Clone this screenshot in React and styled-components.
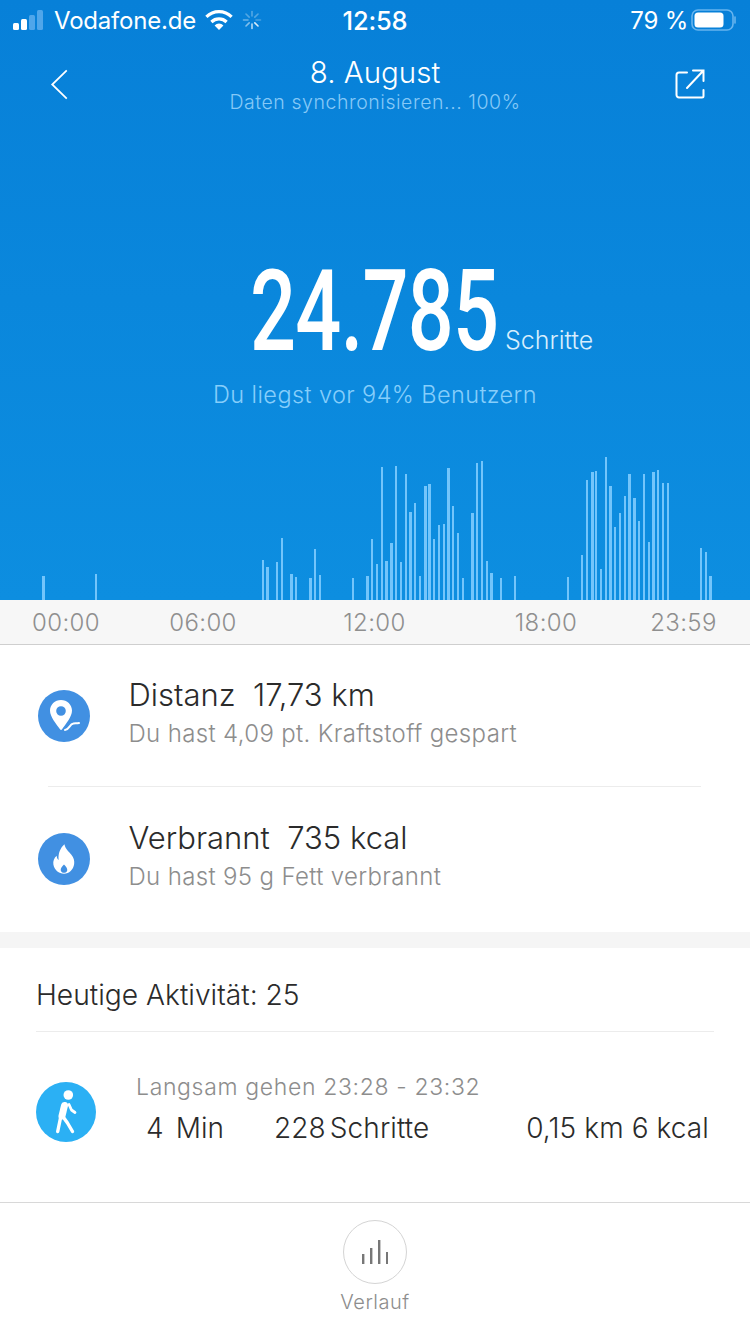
import React from 'react'
import styled, { createGlobalStyle } from 'styled-components'

const bars = [
  [43,3,24],[96,2,26],[263,2,40],[267,3,33],[277,2,38],[282,2,62],[291,3,26],[296,2,23],[310,3,22],[315,2,51],[320,2,25],
  [353,2,22],[367,3,24],[372,2,61],[377,2,36],[382,2,133],[386,3,39],[391,3,57],[396,2,134],[401,2,38],[406,2,126],
  [410,3,88],[415,2,97],[420,2,24],[425,3,114],[429,3,116],[434,2,61],[439,2,75],[444,2,76],[448,3,132],[453,2,94],
  [458,2,67],[463,2,22],[472,3,87],[477,2,137],[482,2,139],[487,2,39],[491,3,27],[501,2,22],[515,2,24],[568,2,23],
  [582,2,45],[587,2,120],[592,3,128],[596,2,129],[601,2,31],[606,2,143],[610,3,114],[615,2,73],[620,2,87],[625,2,104],
  [629,3,126],[634,3,102],[639,2,79],[644,2,126],[649,2,58],[653,3,128],[658,2,130],[663,2,117],[668,2,117],
  [701,2,52],[706,2,48],[710,3,24],
]

const axisLabels = ['00:00', '06:00', '12:00', '18:00', '23:59']

const GlobalStyle = createGlobalStyle`
  html, body { margin: 0; padding: 0; background: #fff; }
  body { font-family: "Inter", "Roboto", sans-serif; color: #333; }
  * { box-sizing: border-box; }
`

const Page = styled.div`
  width: 750px;
  height: 1334px;
  display: flex;
  flex-direction: column;
  overflow: hidden;
`

const Hero = styled.header`
  height: 600px;
  display: flex;
  flex-direction: column;
  background: linear-gradient(180deg, #0780d8 0%, #0d8ee0 100%);
  color: #fff;
`

const StatusBar = styled.div`
  height: 40px;
  padding: 0 13px;
  display: grid;
  grid-template-columns: 1fr auto 1fr;
  align-items: center;
  font-size: 24px;
  letter-spacing: -0.2px;
`

const StatusLeft = styled.div`
  display: flex;
  align-items: center;
  gap: 8px;
`

const Carrier = styled.span`
  margin-left: -1px;
`

const StatusRight = styled.div`
  display: flex;
  align-items: center;
  justify-content: flex-end;
  gap: 3px;
`

const Clock = styled.div`
  font-size: 25.5px;
  font-weight: 500;
`

const NavBar = styled.div`
  height: 80px;
  padding: 14px 50px 0;
  display: grid;
  grid-template-columns: 1fr auto 1fr;
  align-items: start;
`

const NavIcon = styled.svg`
  margin-top: ${p => p.$top}px;
  margin-right: ${p => p.$pull}px;
  justify-self: ${p => p.$side};
`

const NavTitle = styled.div`
  display: flex;
  flex-direction: column;
  align-items: center;
`

const DateText = styled.div`
  font-size: 29.5px;
  line-height: 36px;
  font-weight: 300;
`

const SyncText = styled.div`
  font-size: 19.5px;
  line-height: 24px;
  letter-spacing: 0.55px;
  font-weight: 300;
  color: #86c9f7;
`

const Total = styled.div`
  margin-top: 146px;
  height: 92px;
  display: flex;
  align-items: flex-end;
  padding-left: 250px;
`

const BigNumber = styled.div`
  width: 255px;
  font-family: "Roboto", sans-serif;
  font-size: 113px;
  font-weight: 500;
  line-height: 92px;
  letter-spacing: -1px;
  transform: scaleX(0.717);
  transform-origin: left bottom;
  white-space: nowrap;
`

const Unit = styled.div`
  font-size: 25px;
  line-height: 30px;
  font-weight: 300;
  color: #d7eefd;
  margin-bottom: 3px;
`

const Compare = styled.div`
  margin-top: 22px;
  text-align: center;
  font-size: 23.5px;
  line-height: 30px;
  font-weight: 300;
  letter-spacing: 0.4px;
  color: #86cefb;
`

const Chart = styled.svg`
  margin-top: auto;
  display: block;
`

const Axis = styled.div`
  height: 45px;
  display: grid;
  grid-template-columns: 132px 142px 201px 142px 133px;
  align-items: center;
  background: #f7f7f7;
  border-bottom: 1px solid #cfcfcf;
`

const AxisLabel = styled.div`
  text-align: center;
  font-size: 24px;
  font-weight: 300;
  letter-spacing: 0.4px;
  color: #8f8f8f;
`

const Summary = styled.section`
  height: 287px;
  display: flex;
  flex-direction: column;
`

const SummaryRow = styled.div`
  height: 142px;
  padding: 0 38px;
  display: flex;
  align-items: center;
  gap: 38.5px;
`

const RowRule = styled.div`
  height: 1px;
  margin: -1px 49px 1px 48px;
  background: #ececec;
`

const Round = styled.div`
  flex: none;
  width: ${p => p.$size}px;
  height: ${p => p.$size}px;
  border-radius: 50%;
  background: ${p => p.$color};
  display: flex;
  align-items: center;
  justify-content: center;
`

const SummaryText = styled.div`
  display: flex;
  flex-direction: column;
  gap: 6px;
  margin-top: -6px;
`

const SummaryTitle = styled.div`
  font-size: 31px;
  line-height: 36px;
  font-weight: 300;
  color: #2b2b2b;
  white-space: pre;
`

const SummaryNote = styled.div`
  font-size: 24px;
  line-height: 30px;
  font-weight: 300;
  letter-spacing: 0.35px;
  color: #8d8d8d;
`

const Band = styled.div`
  height: 16px;
  background: #f5f5f5;
`

const Activities = styled.section`
  padding: 0 36px;
  flex: 1;
  display: flex;
  flex-direction: column;
`

const ActivityHead = styled.div`
  height: 84px;
  padding-top: 11px;
  display: flex;
  align-items: center;
  font-size: 28.2px;
  font-weight: 300;
  color: #2b2b2b;
  border-bottom: 1px solid #ececec;
`

const ActivityRow = styled.div`
  margin-top: 50px;
  display: flex;
  align-items: flex-start;
  gap: 40px;
`

const ActivityBody = styled.div`
  flex: 1;
  display: flex;
  flex-direction: column;
`

const ActivityTime = styled.div`
  font-size: 23px;
  line-height: 28px;
  margin-top: -9px;
  font-weight: 300;
  letter-spacing: 0.65px;
  color: #8d8d8d;
`

const ActivityStats = styled.div`
  margin-top: 10px;
  padding: 0 5px 0 10px;
  display: flex;
  font-size: 28px;
  line-height: 34px;
  font-weight: 300;
  letter-spacing: 0.1px;
  color: #2b2b2b;
  white-space: pre;
`

const Duration = styled.div`
  width: 128px;
  word-spacing: -2px;
`

const Steps = styled.div`
  flex: 1;
  word-spacing: -4px;
`

const Footer = styled.footer`
  height: 132px;
  border-top: 1px solid #d8d8d8;
  display: flex;
  flex-direction: column;
  align-items: center;
  padding-top: 17px;
`

const HistoryButton = styled.div`
  width: 64px;
  height: 64px;
  border-radius: 50%;
  border: 1px solid #d4d4d4;
  display: flex;
  align-items: center;
  justify-content: center;
`

const HistoryLabel = styled.div`
  margin-top: 6px;
  font-size: 20px;
  line-height: 24px;
  font-weight: 300;
  letter-spacing: 0.5px;
  color: #8d8d8d;
`

const SignalIcon = () => (
  <svg width="34" height="20" viewBox="0 0 34 20">
    <rect x="0" y="13" width="6" height="7" rx="1.5" fill="#fff" />
    <rect x="8" y="9" width="6" height="11" rx="1.5" fill="#fff" />
    <rect x="16" y="5" width="6" height="15" rx="1.5" fill="#4fa6ea" />
    <rect x="24" y="0" width="6" height="20" rx="1.5" fill="#4fa6ea" />
  </svg>
)

const WifiIcon = () => (
  <svg width="30" height="22" viewBox="0 0 30 22" fill="none">
    <path d="M15 21l-4.400-4.600a6.200 6.200 0 0 1 8.800 0z" fill="#fff" />
    <path d="M7.400 13a11 11 0 0 1 15.200 0" stroke="#fff" strokeWidth="3.200" />
    <path d="M2.400 7.800a18 18 0 0 1 25.200 0" stroke="#fff" strokeWidth="3.200" />
  </svg>
)

const Spinner = () => (
  <svg width="20" height="20" viewBox="0 0 20 20" stroke="#fff" strokeWidth="1.600" strokeLinecap="round">
    {[0.3, 0.3, 0.25, 0.85, 0.7, 0.5, 0.4, 0.3].map((o, i) => (
      <line key={i} x1="10" y1="1.500" x2="10" y2="6" transform={`rotate(${i * 45} 10 10)`} opacity={o} />
    ))}
  </svg>
)

const BatteryIcon = () => (
  <svg width="46" height="22" viewBox="0 0 46 22" fill="none">
    <rect x="1" y="1" width="41" height="20" rx="6" stroke="#67b4ee" strokeWidth="1.600" />
    <rect x="3.500" y="3.500" width="29" height="15" rx="3.500" fill="#fff" />
    <path d="M44 8v6" stroke="#67b4ee" strokeWidth="1.600" strokeLinecap="round" />
  </svg>
)

const BackIcon = () => (
  <NavIcon $top={15} $pull={0} $side="start" width="18" height="31" viewBox="0 0 18 32" fill="none">
    <path d="M17 1.500L2 16l15 14.500" stroke="#fff" strokeWidth="1.800" />
  </NavIcon>
)

const ShareIcon = () => (
  <NavIcon $top={15} $pull={-5} $side="end" width="30" height="30" viewBox="0 0 30 30" fill="none" stroke="#fff" strokeWidth="2" strokeLinecap="round">
    <path d="M12 3.500H4a2.500 2.500 0 0 0-2.500 2.500v20A2.500 2.500 0 0 0 4 28.500h23a1.500 1.500 0 0 0 1.500-1.500v-6" />
    <path d="M18 1.500h10.500V12M28 2L12 19" />
  </NavIcon>
)

const PinIcon = () => (
  <svg width="36" height="36" viewBox="0 0 36 36">
    <path fillRule="evenodd" fill="#fff" d="M15 2c6.100 0 11 4.700 11 10.600 0 6.400-6 13-10.100 19-.4.600-1.300.600-1.700 0C10 25.600 4 19 4 12.600 4 6.700 8.900 2 15 2zm0 6.200a4.800 4.800 0 1 0 0 9.600 4.800 4.800 0 0 0 0-9.600z" />
    <path d="M19 32c4 0 4.500-6 8.500-6.500 1.500-.2 3-.2 5.500-.5" stroke="#fff" strokeWidth="2" fill="none" strokeLinecap="round" />
  </svg>
)

const FlameIcon = () => (
  <svg width="24" height="32" viewBox="0 0 26 34">
    <path fillRule="evenodd" fill="#fff" d="M13.500 1c1 5.500 4.500 7.500 7.500 11.500 2.600 3.500 3.500 6.500 3 10C23.200 28.800 18.500 33 13 33S2.500 29 1.500 23c-.6-3.700.8-7 3.500-9.500.2 2 .8 3.500 2.200 4.500C6.500 11 9 5 13.500 1zM13 23c-2.200 2.300-4 4.500-3.500 6.500.4 1.500 2 2.500 3.500 2.500s3.200-1 3.500-2.500c.4-2-1.300-4.200-3.500-6.500z" />
  </svg>
)

const WalkerIcon = () => (
  <svg width="34" height="46" viewBox="0 0 34 46" fill="none" stroke="#fff" strokeLinecap="round" strokeLinejoin="round">
    <circle cx="19.300" cy="6" r="4.800" fill="#fff" stroke="none" />
    <path d="M15.500 16.500L13 27" strokeWidth="7" />
    <path d="M11.500 29L8.700 42.500M13.500 27l5 7 5 8.500" strokeWidth="3.400" />
    <path d="M20 15.500l2.500 5.500 3.500 2.500" strokeWidth="2.800" />
  </svg>
)

const HistoryIcon = () => (
  <svg width="26" height="24" viewBox="0 0 26 24" fill="#777">
    <rect x="0" y="14" width="2.400" height="10" />
    <rect x="8" y="8" width="2.400" height="16" />
    <rect x="16" y="0" width="2.400" height="24" />
    <rect x="24" y="12" width="2" height="12" />
  </svg>
)

const App = () => (
  <Page>
    <GlobalStyle />
    <Hero>
      <StatusBar>
        <StatusLeft>
          <SignalIcon />
          <Carrier>Vodafone.de</Carrier>
          <WifiIcon />
          <Spinner />
        </StatusLeft>
        <Clock>12:58</Clock>
        <StatusRight>
          <span>79 %</span>
          <BatteryIcon />
        </StatusRight>
      </StatusBar>
      <NavBar>
        <BackIcon />
        <NavTitle>
          <DateText>8. August</DateText>
          <SyncText>Daten synchronisieren... 100%</SyncText>
        </NavTitle>
        <ShareIcon />
      </NavBar>
      <Total>
        <BigNumber>24.785</BigNumber>
        <Unit>Schritte</Unit>
      </Total>
      <Compare>Du liegst vor 94% Benutzern</Compare>
      <Chart width="750" height="145" viewBox="0 0 750 145" shapeRendering="crispEdges">
        {bars.map(([x, w, h]) => (
          <rect key={x} x={x - Math.floor(w / 2)} y={145 - h} width={w} height={h} fill="#73c5fb" />
        ))}
      </Chart>
    </Hero>
    <Axis>
      {axisLabels.map(label => (
        <AxisLabel key={label}>{label}</AxisLabel>
      ))}
    </Axis>
    <Summary>
      <SummaryRow>
        <Round $size={52} $color="#4190e2"><PinIcon /></Round>
        <SummaryText>
          <SummaryTitle>Distanz  17,73 km</SummaryTitle>
          <SummaryNote>Du hast 4,09 pt. Kraftstoff gespart</SummaryNote>
        </SummaryText>
      </SummaryRow>
      <RowRule />
      <SummaryRow>
        <Round $size={52} $color="#4190e2"><FlameIcon /></Round>
        <SummaryText>
          <SummaryTitle>Verbrannt  735 kcal</SummaryTitle>
          <SummaryNote>Du hast 95 g Fett verbrannt</SummaryNote>
        </SummaryText>
      </SummaryRow>
    </Summary>
    <Band />
    <Activities>
      <ActivityHead>Heutige Aktivität: 25</ActivityHead>
      <ActivityRow>
        <Round $size={60} $color="#2bb0f4"><WalkerIcon /></Round>
        <ActivityBody>
          <ActivityTime>Langsam gehen 23:28 - 23:32</ActivityTime>
          <ActivityStats>
            <Duration>4  Min</Duration>
            <Steps>228 Schritte</Steps>
            <div>0,15 km 6 kcal</div>
          </ActivityStats>
        </ActivityBody>
      </ActivityRow>
    </Activities>
    <Footer>
      <HistoryButton><HistoryIcon /></HistoryButton>
      <HistoryLabel>Verlauf</HistoryLabel>
    </Footer>
  </Page>
)

export default App
